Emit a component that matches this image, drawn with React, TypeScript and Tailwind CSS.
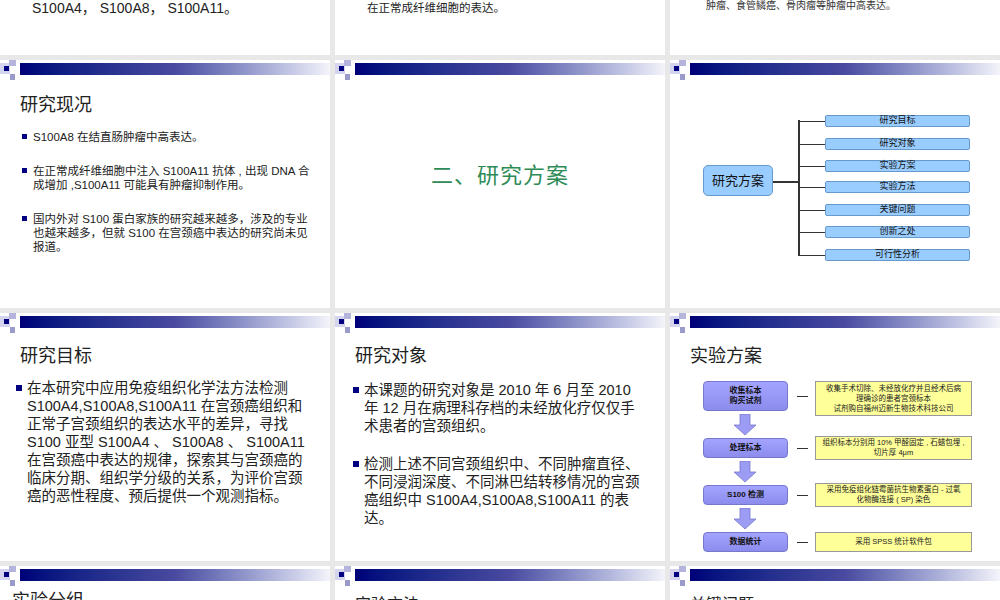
import React from "react";

const F = { fontFamily: '"Liberation Sans","Noto Sans CJK SC",sans-serif' };

function Header() {
  return (
    <div className="relative h-[20px] shrink-0">
      <div className="absolute left-0 top-[3px] w-[10px] h-[11px] bg-[#d4d4ee]" />
      <div className="absolute left-[9px] top-0 w-[7px] h-[6px] bg-[#b4b4dc]" />
      <div className="absolute left-[4px] top-[6px] w-[5px] h-[5px] bg-[#000080]" />
      <div className="absolute left-[10px] top-[14px] w-[5px] h-[6px] bg-[#9a9acb]" />
      <div className="absolute left-[20px] right-0 top-[3px] h-[12px] bg-gradient-to-r from-[#000078] via-[#4a4aa0] to-[#f4f4fa]" />
    </div>
  );
}

function Slide({ children, h = 248, header = true, className = "" }: { children?: React.ReactNode; h?: number; header?: boolean; className?: string }) {
  return (
    <div className={"bg-white overflow-hidden flex flex-col " + className} style={{ height: h }}>
      {header && <Header />}
      {children}
    </div>
  );
}

function Title({ t }: { t: string }) {
  return <div className="text-[18px] text-[#222] pl-[20px] leading-none">{t}</div>;
}

function SB({ children }: { children: React.ReactNode }) {
  return (
    <div className="flex text-[11.5px] leading-[14px] text-[#222]">
      <div className="w-[5px] h-[5px] bg-[#000080] mt-[4px] mr-[6px] shrink-0" />
      <div>{children}</div>
    </div>
  );
}

function LB({ children }: { children: React.ReactNode }) {
  return (
    <div className="flex text-[14.5px] leading-[18px] text-[#222]">
      <div className="w-[6px] h-[6px] bg-[#000080] mt-[6px] mr-[5px] shrink-0" />
      <div>{children}</div>
    </div>
  );
}

const branches = ["研究目标", "研究对象", "实验方案", "实验方法", "关键问题", "创新之处", "可行性分析"];
const ys = [31, 54, 76, 97, 120, 142, 165];

function Flow() {
  const boxes = [
    { t: ["收集标本", "购买试剂"], y: 16, h: 30 },
    { t: ["处理标本"], y: 73, h: 20 },
    { t: ["S100 检测"], y: 120, h: 20 },
    { t: ["数据统计"], y: 167, h: 20 },
  ];
  const notes = [
    { t: ["收集手术切除、未经放化疗并且经术后病", "理确诊的患者宫颈标本", "试剂购自福州迈新生物技术科技公司"], y: 16, h: 35 },
    { t: ["组织标本分别用 10% 甲醛固定 , 石蜡包埋 ,", "切片厚 4μm"], y: 71, h: 24 },
    { t: ["采用免疫组化链霉菌抗生物素蛋白 - 过氧", "化物酶连接 ( SP) 染色"], y: 118, h: 24 },
    { t: ["采用 SPSS 统计软件包"], y: 167, h: 20 },
  ];
  return (
    <div className="relative h-[190px]">
      {boxes.map((b, i) => (
        <React.Fragment key={i}>
          <div className="absolute left-[33px] w-[85px] rounded-[4px] border border-[#7777cc] bg-gradient-to-b from-[#a4a4ff] to-[#8c8cee] flex flex-col items-center justify-center text-[8px] font-bold text-[#111] leading-[10px]" style={{ top: b.y, height: b.h }}>
            {b.t.map((s) => <div key={s}>{s}</div>)}
          </div>
          <div className="absolute left-[127px] w-[11px] h-[1px] bg-[#333]" style={{ top: b.y + b.h / 2 }} />
          {i < 3 && (
            <svg className="absolute left-[63px]" style={{ top: b.y + b.h + 3 }} width="24" height="22" viewBox="0 0 24 22">
              <path d="M7 0h10v11h6L12 21 1 11h6z" fill="#9c9cf4" stroke="#7777cc" strokeWidth="0.8" />
            </svg>
          )}
        </React.Fragment>
      ))}
      {notes.map((n, i) => (
        <div key={i} className="absolute left-[145px] w-[157px] bg-[#ffff99] border border-[#999] flex flex-col items-center justify-center text-[7.5px] leading-[10px] text-[#222]" style={{ top: n.y, height: n.h }}>
          {n.t.map((s) => <div key={s}>{s}</div>)}
        </div>
      ))}
    </div>
  );
}

export default function App() {
  return (
    <div className="w-[1000px] h-[600px] bg-[#e8e8e8] overflow-hidden flex flex-col gap-[5px]" style={F}>
      <div className="grid grid-cols-3 gap-[5px]">
        <Slide h={55} header={false} className="justify-start">
          <div className="pl-[32px] pt-[1px] text-[14px] leading-[14px] text-[#222]">S100A4， S100A8， S100A11。</div>
        </Slide>
        <Slide h={55} header={false}>
          <div className="pl-[32px] pt-[2px] text-[11.5px] leading-[12px] text-[#222]">在正常成纤维细胞的表达。</div>
        </Slide>
        <Slide h={55} header={false}>
          <div className="pl-[36px] pt-[1px] text-[10px] leading-[10px] text-[#333]">肿瘤、食管鳞癌、骨肉瘤等肿瘤中高表达。</div>
        </Slide>
      </div>

      <div className="grid grid-cols-3 gap-[5px]">
        <Slide>
          <div className="pt-[16px]"><Title t="研究现况" /></div>
          <div className="pl-[22px] pr-[20px] pt-[16px] flex flex-col gap-[20px]">
            <SB>S100A8 在结直肠肿瘤中高表达。</SB>
            <SB>在正常成纤维细胞中注入 S100A11 抗体 , 出现 DNA 合成增加 ,S100A11 可能具有肿瘤抑制作用。</SB>
            <SB>国内外对 S100 蛋白家族的研究越来越多，涉及的专业也越来越多，但就 S100 在宫颈癌中表达的研究尚未见报道。</SB>
          </div>
        </Slide>
        <Slide>
          <div className="flex-1 flex items-center justify-center pb-[38px] text-[22px] text-[#2e8b57] tracking-[1px]">二、研究方案</div>
        </Slide>
        <Slide>
          <div className="relative flex-1">
            <div className="absolute left-[33px] top-[85px] w-[70px] h-[31px] rounded-[5px] bg-[#99ccff] border border-[#6699cc] flex items-center justify-center text-[13px] text-[#111]">研究方案</div>
            <div className="absolute left-[103px] top-[101px] w-[25px] h-[1.5px] bg-[#333]" />
            <div className="absolute left-[128px] top-[40px] w-[1.5px] h-[135px] bg-[#333]" />
            {branches.map((b, i) => (
              <React.Fragment key={b}>
                <div className="absolute left-[128px] w-[27px] h-[1px] bg-[#333]" style={{ top: ys[i] + 10 }} />
                <div className="absolute left-[155px] w-[145px] h-[12px] rounded-[2px] bg-[#99ccff] border border-[#6699cc] flex items-center justify-center text-[9px] text-[#111]" style={{ top: ys[i] + 4 }}>{b}</div>
              </React.Fragment>
            ))}
          </div>
        </Slide>
      </div>

      <div className="grid grid-cols-3 gap-[5px]">
        <Slide>
          <div className="pt-[14px]"><Title t="研究目标" /></div>
          <div className="pl-[16px] pr-[14px] pt-[14px]">
            <LB>在本研究中应用免疫组织化学法方法检测 S100A4,S100A8,S100A11 在宫颈癌组织和正常子宫颈组织的表达水平的差异，寻找 S100 亚型 S100A4 、 S100A8 、 S100A11 在宫颈癌中表达的规律，探索其与宫颈癌的临床分期、组织学分级的关系，为评价宫颈癌的恶性程度、预后提供一个观测指标。</LB>
          </div>
        </Slide>
        <Slide>
          <div className="pt-[14px]"><Title t="研究对象" /></div>
          <div className="pl-[18px] pr-[22px] pt-[16px] flex flex-col gap-[20px]">
            <LB>本课题的研究对象是 2010 年 6 月至 2010 年 12 月在病理科存档的未经放化疗仅仅手术患者的宫颈组织。</LB>
            <LB>检测上述不同宫颈组织中、不同肿瘤直径、不同浸润深度、不同淋巴结转移情况的宫颈癌组织中 S100A4,S100A8,S100A11 的表达。</LB>
          </div>
        </Slide>
        <Slide>
          <div className="pt-[14px]"><Title t="实验方案" /></div>
          <Flow />
        </Slide>
      </div>

      <div className="grid grid-cols-3 gap-[5px]">
        <Slide h={40}>
          <div className="flex items-end pt-[2px]">
            <div className="text-[18px] pl-[12px] text-[#222]">实验分组</div>
            <div className="text-[10px] pl-[40px] text-[#333]">（每组选取五十 30 例标</div>
          </div>
        </Slide>
        <Slide h={40}>
          <div className="text-[16px] pl-[20px] pt-[7px] text-[#222]">实验方法</div>
        </Slide>
        <Slide h={40}>
          <div className="text-[16px] pl-[20px] pt-[7px] text-[#222]">关键问题</div>
        </Slide>
      </div>
    </div>
  );
}
